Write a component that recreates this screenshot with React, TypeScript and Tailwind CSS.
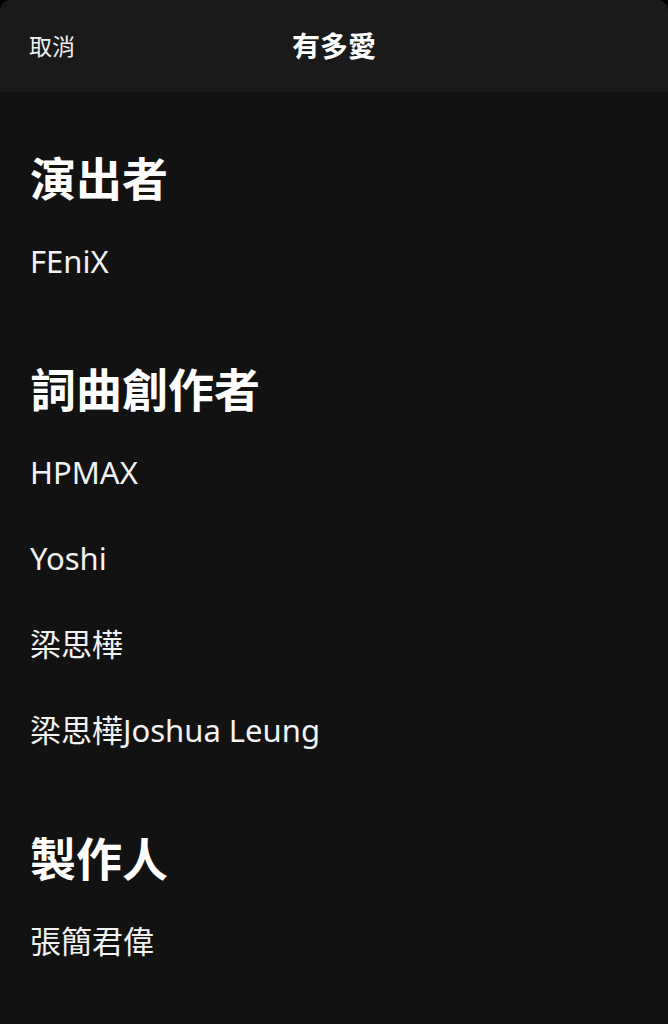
import React from "react";

const font = {
  fontFamily: '"Noto Sans", "Noto Sans CJK TC", sans-serif',
};

function Section({ title, items }: { title: string; items: string[] }) {
  return (
    <section className="flex flex-col">
      <h2 className="h-[56px] flex items-center text-[46px] font-bold text-white leading-none">
        {title}
      </h2>
      <div className="mt-[12px] flex flex-col">
        {items.map((it) => (
          <div key={it} className="h-[86px] flex items-center text-[31px] text-[#f2f2f2] leading-none">
            {it}
          </div>
        ))}
      </div>
    </section>
  );
}

export default function App() {
  return (
    <div className="w-[668px] h-[1024px] bg-black overflow-hidden" style={font}>
      <div className="h-full bg-[#121212] rounded-t-[10px] overflow-hidden flex flex-col">
        <header className="h-[92px] bg-[#1a1a1a] relative flex items-center justify-center shrink-0">
          <span className="absolute left-[29px] top-1/2 -translate-y-1/2 text-[23px] text-[#f0f0f0] leading-none">
            取消
          </span>
          <span className="text-[28px] font-bold text-white leading-none">有多愛</span>
        </header>
        <main className="px-[30px] pt-[58px] flex flex-col gap-[57px]">
          <Section title="演出者" items={["FEniX"]} />
          <Section
            title="詞曲創作者"
            items={["HPMAX", "Yoshi", "梁思樺", "梁思樺Joshua Leung"]}
          />
          <Section title="製作人" items={["張簡君偉"]} />
        </main>
      </div>
    </div>
  );
}
